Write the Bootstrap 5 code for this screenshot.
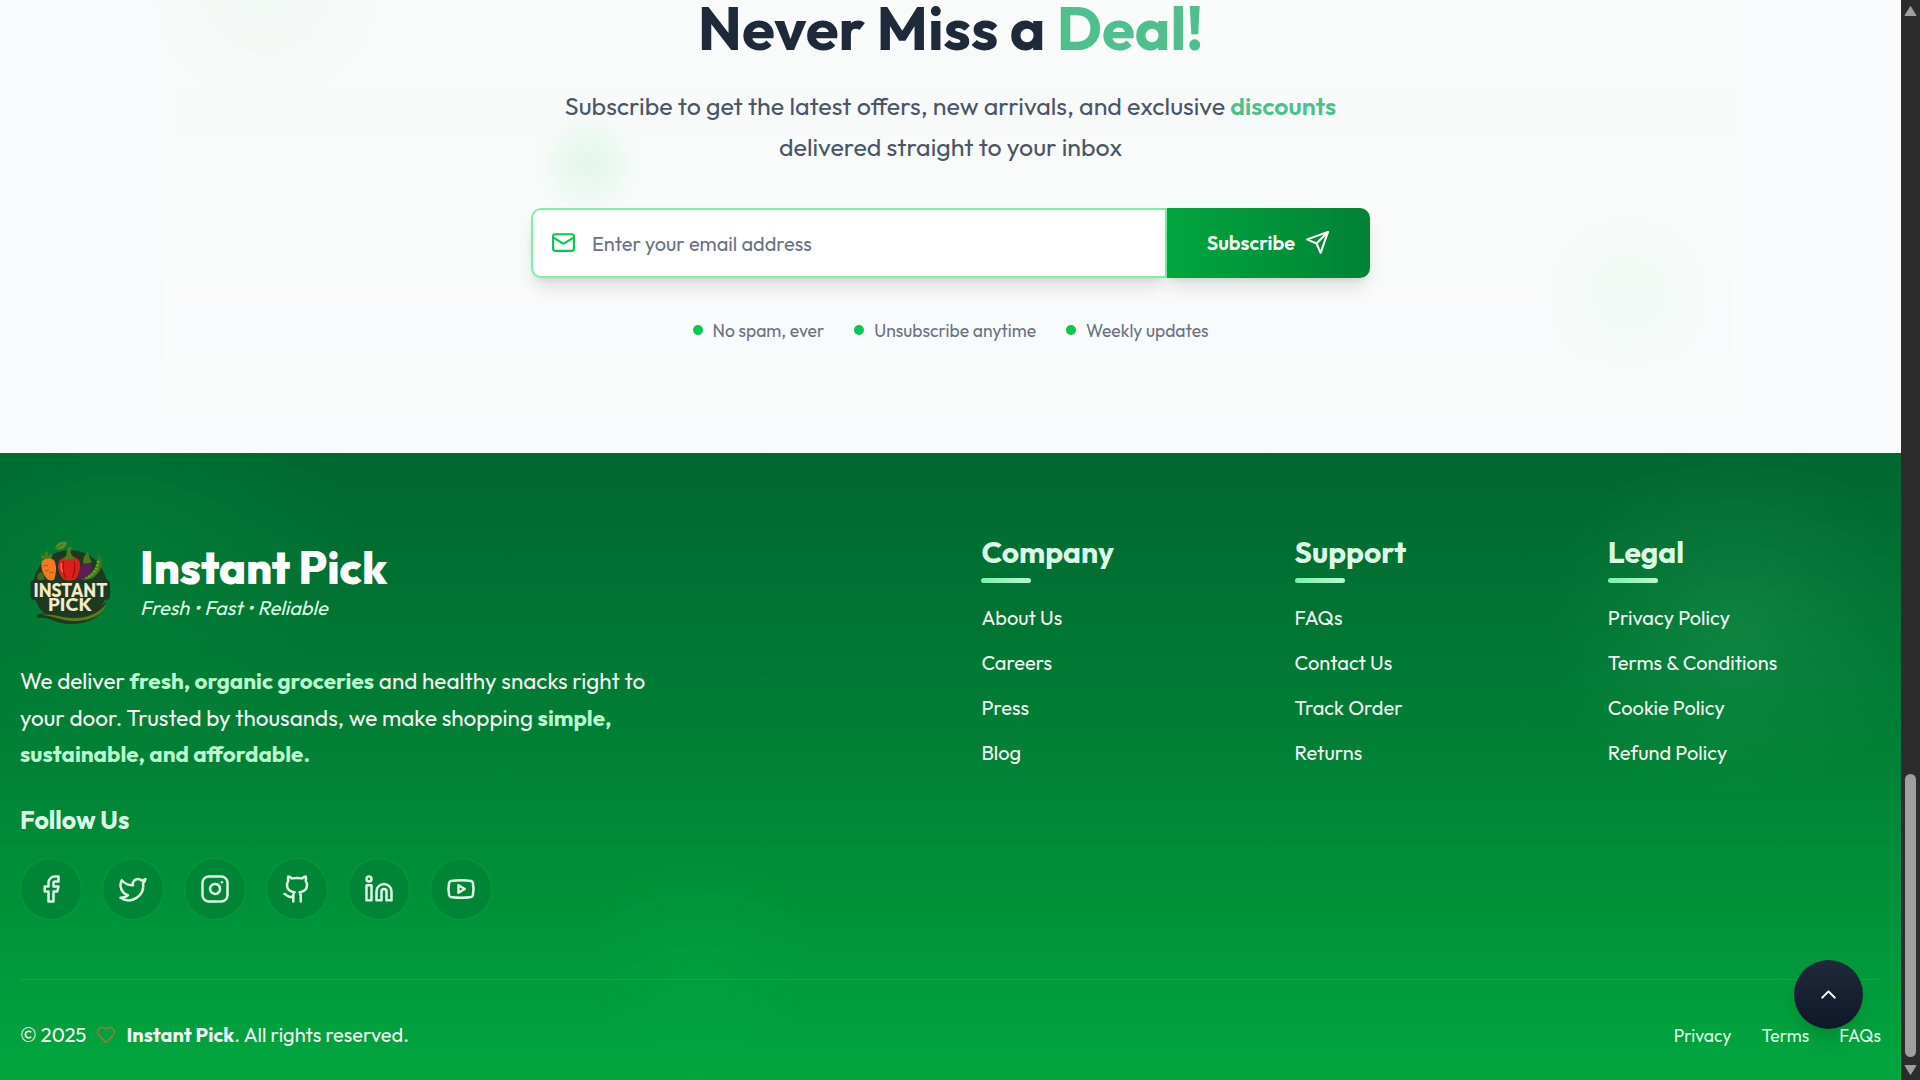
<!DOCTYPE html>
<html lang="en">
<head>
<meta charset="utf-8">
<title>Instant Pick</title>
<link href="https://cdn.jsdelivr.net/npm/bootstrap@5.3.0/dist/css/bootstrap.min.css" rel="stylesheet">
<style>
  body { width: 1920px; height: 1080px; overflow: hidden; font-family: Outfit, Lato, sans-serif; background: #f9fafb; }
  .page { width: 1901px; height: 1080px; overflow: hidden; }
  .glow { position: absolute; border-radius: 50%; pointer-events: none; }

  .news { height: 453px; overflow: hidden; background: #f9fafb; }
  .news-tint { position: absolute; left: 165px; top: -20px; width: 1576px; height: 430px; background: linear-gradient(180deg, #f9fafa, #f8fcfb); filter: blur(3px); }
  .glow-a { left: 145px; top: -130px; width: 240px; height: 240px; background: radial-gradient(closest-side, rgba(0,201,81,.035), rgba(0,201,81,.015) 60%, transparent); }
  .glow-b { left: 529px; top: 105px; width: 118px; height: 118px; background: radial-gradient(closest-side, rgba(0,201,81,.085), rgba(0,201,81,.05) 45%, rgba(0,201,81,.012) 78%, transparent); }
  .glow-c { left: 1528px; top: 197px; width: 200px; height: 200px; background: radial-gradient(closest-side, rgba(0,201,81,.035), rgba(0,201,81,.012) 60%, transparent); }
  .news-title { margin: -2px 0 28px; font-size: 60px; line-height: 60px; font-weight: 700; color: #1e2939; letter-spacing: -.04px; }
  .mint { color: #4fc08d; font-weight: inherit; }
  .news-sub { margin: 0 0 40.8px; font-size: 25px; line-height: 40.6px; color: #4a5565; }
  .news-sub b { font-weight: 600; }
  .news-form { width: 839px; height: 70px; margin-bottom: 40px; }
  .mail-box { width: 636px; border: 2px solid #7bf1a8; border-radius: 10px 0 0 10px; padding-left: 18px; gap: 16px; background: #fff; color: #6a7282; font-size: 20px; box-shadow: 0 12px 18px -4px rgba(0,0,0,.12), 0 4px 7px -4px rgba(0,0,0,.12); }
  .mail-box span { padding-top: 2px; }
  .send-btn { width: 203px; border: 0; border-radius: 0 10px 10px 0; background: linear-gradient(90deg, #00a63e, #008236); color: #fff; font-size: 20px; font-weight: 600; gap: 10px; box-shadow: 0 12px 18px -4px rgba(0,0,0,.12), 0 4px 7px -4px rgba(0,0,0,.12); }
  .perks { gap: 30px; font-size: 17.5px; line-height: 25px; color: #6a7282; }
  .perks > div { gap: 10px; }
  .dot { width: 10px; height: 10px; border-radius: 50%; background: #00c951; }

  .foot { height: 627px; padding: 80px 20px 0; overflow: hidden; background: linear-gradient(180deg, #016630, #008236 50%, #00a63e); color: #f3f4f6; }
  .glow-d { left: -120px; top: -130px; width: 480px; height: 420px; background: radial-gradient(closest-side, rgba(0,166,62,.22), transparent); }
  .glow-e { left: 1550px; top: -15px; width: 370px; height: 370px; background: radial-gradient(closest-side, rgba(123,241,168,.11), rgba(123,241,168,.05) 50%, transparent); }
  .glow-f { left: 590px; top: 390px; width: 220px; height: 240px; background: radial-gradient(closest-side, rgba(0,201,81,.11), transparent); }
  .foot-grid { display: grid; grid-template-columns: 921.4px repeat(3, 1fr); column-gap: 40px; }
  .brand { gap: 20px; height: 100px; margin-bottom: 30px; }
  .brand-name { font-size: 45px; line-height: 45px; font-weight: 800; color: #fff; margin-bottom: 5px; letter-spacing: -.08px; }
  .brand-tag { font-size: 20px; line-height: 25px; font-style: italic; color: #dcfce7; padding-bottom: 2px; }
  .about { font-size: 22.5px; line-height: 36.56px; margin-bottom: 30px; }
  .about b { color: #b9f8cf; font-weight: 700; }
  .follow { font-size: 25px; line-height: 35px; font-weight: 700; color: #dcfce7; margin-bottom: 20px; }
  .socials { gap: 20px; margin-bottom: 59px; }
  .soc { width: 62px; height: 62px; border-radius: 50%; border: 1px solid rgba(0,166,62,.7); background: rgba(0,130,54,.8); color: #dcfce7; }
  .ico { fill: none; stroke: currentColor; stroke-width: 2; stroke-linecap: round; stroke-linejoin: round; flex: none; }
  .mail-ico { color: #00c951; }
  .heart-ico { color: #a8733f; margin: 0 10px; stroke-width: 1.6; }
  .col-title { font-size: 30px; line-height: 37.5px; font-weight: 700; color: #dcfce7; margin: 1px 0 6.5px; }
  .bar { width: 50px; height: 5px; border-radius: 3px; background: linear-gradient(90deg, #7bf1a8, #b9f8cf); margin-bottom: 19.5px; }
  .links { gap: 15px; font-size: 20px; line-height: 30px; }
  .legal { border-top: 1px solid rgba(0,201,81,.35); padding-top: 40px; line-height: 30px; font-size: 20px; }
  .legal-links { gap: 30px; font-size: 17.5px; color: #dcfce7; padding-top: 1px; }
  .to-top { position: absolute; left: 1794px; top: 960px; width: 69px; height: 69px; border-radius: 50%; background: linear-gradient(180deg, #1e2939, #101828); box-shadow: 0 12px 18px -4px rgba(0,0,0,.14); color: #fff; }
  .scroller { width: 19px; height: 1080px; background: #2c2c2c; }
</style>
</head>
<body>
<div class="d-flex position-relative">
<div class="page">
  <section class="news position-relative">
    <div class="news-tint"></div><div class="glow glow-a"></div><div class="glow glow-b"></div><div class="glow glow-c"></div>
    <div class="position-relative d-flex flex-column align-items-center text-center">
      <h2 class="news-title">Never Miss a <span class="mint">Deal!</span></h2>
      <p class="news-sub">Subscribe to get the latest offers, new arrivals, and exclusive <b class="mint">discounts</b><br>delivered straight to your inbox</p>
      <div class="news-form d-flex">
        <div class="mail-box d-flex align-items-center">
          <svg class="ico mail-ico" width="25" height="25" viewBox="0 0 24 24"><rect x="2" y="4" width="20" height="16" rx="2"/><path d="m22 7-8.97 5.7a1.94 1.94 0 0 1-2.06 0L2 7"/></svg>
          <span>Enter your email address</span>
        </div>
        <button class="send-btn d-flex align-items-center justify-content-center"><span>Subscribe</span>
          <svg class="ico" width="25" height="25" viewBox="0 0 24 24"><path d="m22 2-7 20-4-9-9-4Z"/><path d="M22 2 11 13"/></svg>
        </button>
      </div>
      <div class="perks d-flex">
        <div class="d-flex align-items-center"><i class="dot"></i><span>No spam, ever</span></div>
        <div class="d-flex align-items-center"><i class="dot"></i><span>Unsubscribe anytime</span></div>
        <div class="d-flex align-items-center"><i class="dot"></i><span>Weekly updates</span></div>
      </div>
    </div>
  </section>
  <footer class="foot position-relative">
    <div class="glow glow-d"></div><div class="glow glow-e"></div><div class="glow glow-f"></div>
    <div class="foot-grid position-relative">
      <div>
        <div class="brand d-flex align-items-center">
          <svg width="100" height="100" viewBox="5 3 100 100">
            <circle cx="55" cy="57" r="37" fill="#1d3a20"/>
            <rect x="15.500" y="50" width="79.500" height="20" rx="4" fill="#1d3a20"/>
            <path d="M24 84c12-3 22 3 36 2 14-1 24-6 31-14-2 12-14 22-35 22-14 0-23-8-32-6-3 0-3-3 0-4z" fill="#1d3a20"/>
            <path d="M27 85c10-2 22 4 35 3 14-1 24-7 29-14-1 8-12 17-32 17-14 0-22-6-32-6z" fill="#5a7a1c"/>
            <path d="M40 19c1-6 6-8 12-7-1 6-5 9-12 7z" fill="#5f8a26"/><path d="M40 19l8-5" stroke="#2f5a18" stroke-width=".7"/>
            <path d="M31 31c-4-2-6-4-5-7 2 1 3 2 4 3-1-4 0-6 2-6 1 2 1 4 1 6 1-3 3-4 4-3 1 3-1 5-3 7z" fill="#4d7a1f"/>
            <path d="M27 31c5-4 12-3 13 1 2 6 1 12-1 18-3 1-6 0-7-1-4-5-7-12-5-18z" fill="#f4791f"/>
            <path d="M28 36l5-1M34 43l5-1M30 41l4-1" stroke="#c7520f" stroke-width="1"/>
            <path d="M70 32c3-1 7 1 7 6 0 8-3 12-9 12s-8-5-5-9 3-8 7-9z" fill="#5b1f4f"/>
            <path d="M68 33c0-5 2-9 5-11 1 4 2 7 4 10-3 1-6 2-9 1z" fill="#4b7a20"/>
            <path d="M84 25c5 6 3 16-5 22-4 3-9 3-12 2 9-3 14-10 17-24z" fill="#3f7a1c"/><path d="M83 31c0 8-5 14-12 17" stroke="#7aa632" stroke-width="2.200" stroke-dasharray="2 1.500" fill="none"/>
            <path d="M46 29c3-2 6-2 8-1 3-1 6-1 9 1 4 4 2 13-2 20-4 2-9 2-13 0-5-6-7-16-2-20z" fill="#d9201a"/>
            <path d="M49 31c-2 5-1 12 2 17M59 31c1 5 1 12-2 17" stroke="#9c0f10" stroke-width="1.200" fill="none"/><path d="M46.500 33c-1 4 0 7 1 9" stroke="#ff6a50" stroke-width="1.600" fill="none"/>
            <path d="M48 29c3-2 4-5 4-10 2-3 4-3 5-1-2 3-2 7 3 10-4 2-8 2-12 1z" fill="#4b7a20"/>
            <path d="M23 50c-2-4 0-7 3-8 3 2 4 5 3 8z" fill="#3f6b1d"/>
            <text x="18.500" y="66.500" font-family="Outfit, sans-serif" font-weight="700" font-size="19" textLength="74" lengthAdjust="spacingAndGlyphs" fill="#f5e9c8">INSTANT</text>
            <text x="33" y="80.500" font-family="Outfit, sans-serif" font-weight="700" font-size="18" textLength="44" lengthAdjust="spacingAndGlyphs" fill="#f5e9c8">PICK</text>
          </svg>
          <div><div class="brand-name">Instant Pick</div><div class="brand-tag">Fresh • Fast • Reliable</div></div>
        </div>
        <div class="about">We deliver <b>fresh, organic groceries</b> and healthy snacks right to<br>your door. Trusted by thousands, we make shopping <b>simple,</b><br><b>sustainable, and affordable.</b></div>
        <div class="follow">Follow Us</div>
        <div class="socials d-flex">
          <a class="soc d-flex align-items-center justify-content-center"><svg class="ico" width="30" height="30" viewBox="0 0 24 24"><path d="M18 2h-3a5 5 0 0 0-5 5v3H7v4h3v8h4v-8h3l1-4h-4V7a1 1 0 0 1 1-1h3z"/></svg></a>
          <a class="soc d-flex align-items-center justify-content-center"><svg class="ico" width="30" height="30" viewBox="0 0 24 24"><path d="M22 4s-.7 2.1-2 3.4c1.6 10-9.4 17.3-18 11.6 2.2.1 4.4-.6 6-2C3 15.5.5 9.6 3 5c2.2 2.6 5.6 4.1 9 4-.9-4.2 4-6.6 7-3.8 1.1 0 3-1.2 3-1.2z"/></svg></a>
          <a class="soc d-flex align-items-center justify-content-center"><svg class="ico" width="30" height="30" viewBox="0 0 24 24"><rect x="2" y="2" width="20" height="20" rx="5"/><path d="M16 11.37A4 4 0 1 1 12.63 8 4 4 0 0 1 16 11.37z"/><path d="M17.5 6.5h.01"/></svg></a>
          <a class="soc d-flex align-items-center justify-content-center"><svg class="ico" width="30" height="30" viewBox="0 0 24 24"><path d="M15 22v-4a4.8 4.8 0 0 0-1-3.5c3 0 6-2 6-5.5.08-1.25-.27-2.48-1-3.5.28-1.15.28-2.35 0-3.5 0 0-1 0-3 1.5-2.64-.5-5.36-.5-8 0C6 2 5 2 5 2c-.3 1.15-.3 2.35 0 3.5A5.403 5.403 0 0 0 4 9c0 3.5 3 5.5 6 5.5-.39.49-.68 1.05-.85 1.65-.17.6-.22 1.23-.15 1.85v4"/><path d="M9 18c-4.51 2-5-2-7-2"/></svg></a>
          <a class="soc d-flex align-items-center justify-content-center"><svg class="ico" width="30" height="30" viewBox="0 0 24 24"><path d="M16 8a6 6 0 0 1 6 6v7h-4v-7a2 2 0 0 0-4 0v7h-4v-7a6 6 0 0 1 6-6z"/><rect x="2" y="9" width="4" height="12"/><circle cx="4" cy="4" r="2"/></svg></a>
          <a class="soc d-flex align-items-center justify-content-center"><svg class="ico" width="30" height="30" viewBox="0 0 24 24"><path d="M2.5 17a24.12 24.12 0 0 1 0-10 2 2 0 0 1 1.4-1.4 49.56 49.56 0 0 1 16.2 0A2 2 0 0 1 21.5 7a24.12 24.12 0 0 1 0 10 2 2 0 0 1-1.4 1.4 49.55 49.55 0 0 1-16.2 0A2 2 0 0 1 2.5 17"/><path d="m10 15 5-3-5-3z"/></svg></a>
        </div>
      </div>
      <div><h3 class="col-title">Company</h3><div class="bar"></div><div class="links d-flex flex-column"><span>About Us</span><span>Careers</span><span>Press</span><span>Blog</span></div></div>
      <div><h3 class="col-title">Support</h3><div class="bar"></div><div class="links d-flex flex-column"><span>FAQs</span><span>Contact Us</span><span>Track Order</span><span>Returns</span></div></div>
      <div><h3 class="col-title">Legal</h3><div class="bar"></div><div class="links d-flex flex-column"><span>Privacy Policy</span><span>Terms &amp; Conditions</span><span>Cookie Policy</span><span>Refund Policy</span></div></div>
    </div>
    <div class="legal position-relative d-flex justify-content-between">
      <div class="d-flex align-items-center"><span>© 2025</span><svg class="ico heart-ico" width="20" height="20" viewBox="0 0 24 24"><path d="M19 14c1.49-1.46 3-3.21 3-5.5A5.5 5.5 0 0 0 16.500 3c-1.760 0-3 .5-4.500 2-1.500-1.500-2.740-2-4.500-2A5.500 5.500 0 0 0 2 8.500c0 2.300 1.500 4.050 3 5.500l7 7Z"/></svg><b>Instant Pick</b><span>. All rights reserved.</span></div>
      <div class="legal-links d-flex"><span>Privacy</span><span>Terms</span><span>FAQs</span></div>
    </div>
  </footer>
</div>
<button class="to-top border-0 d-flex align-items-center justify-content-center p-0"><svg class="ico" width="25" height="25" viewBox="0 0 24 24"><path d="m18 15-6-6-6 6"/></svg></button>
<svg class="scroller" viewBox="0 0 19 1080"><path d="M9.500 6.500 15 15.500H4z" fill="#9f9f9f" stroke="#9f9f9f" stroke-linejoin="round"/><rect x="4" y="774" width="11" height="283" rx="5.500" fill="#9f9f9f"/><path d="M9.500 1074.500 15 1065.500H4z" fill="#9f9f9f" stroke="#9f9f9f" stroke-linejoin="round"/></svg>
</div>
<script src="https://cdn.jsdelivr.net/npm/bootstrap@5.3.0/dist/js/bootstrap.bundle.min.js"></script>
</body>
</html>
